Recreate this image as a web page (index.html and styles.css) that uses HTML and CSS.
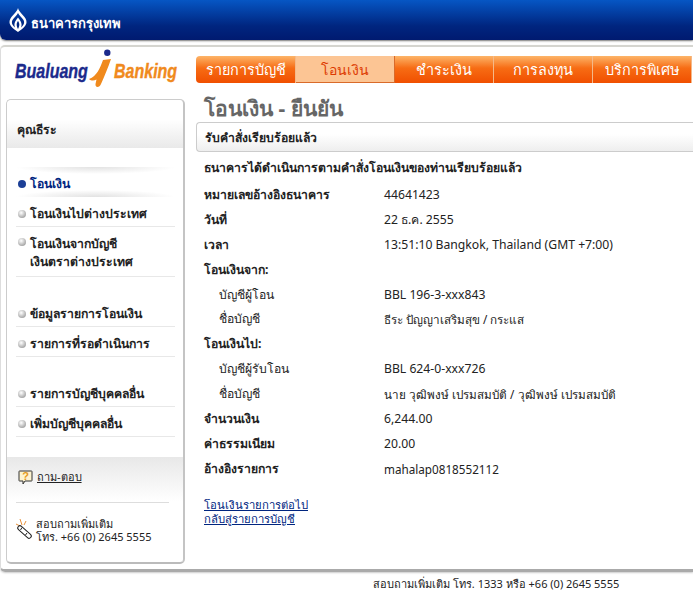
FILE: index.html
```html
<!DOCTYPE html>
<html lang="th">
<head>
<meta charset="utf-8">
<title>Bualuang iBanking</title>
<link rel="stylesheet" href="styles.css">
</head>
<body>
<header class="topbar">
  <svg class="lotus" width="18" height="24" viewBox="0 0 18 24">
    <path fill-rule="evenodd" fill="#fff" d="M9 0C10 4 14 6.500 16.500 10.500C19 15 17 18.500 9 24C1 18.500 -1 15 1.500 10.500C4 6.500 8 4 9 0ZM9 5C8 7.500 5 9.500 3.500 12C2 15 3.500 17.500 6 19.500C4.500 16 6 13 9 9.500C12 13 13.500 16 12 19.500C14.500 17.500 16 15 14.500 12C13 9.500 10 7.500 9 5ZM9 13C7.500 15 7 17 9 21C11 17 10.500 15 9 13Z"/>
  </svg>
  <span class="bankname">ธนาคารกรุงเทพ</span>
</header>
<div class="shell">
  <div class="brandrow">
    <div class="logo">
      <span class="logo-a">Bualuang</span>
      <svg class="logo-i" width="26" height="40" viewBox="0 0 26 40">
        <circle cx="19.300" cy="3.700" r="3.200" fill="#1b2a8c"/>
        <path d="M1 30C9 27 12 19 15 11L23 10C20 19 16 28 13 35C11.500 39 7 39 7.500 35L8.500 30.500C6 32 3 32 1 30Z" fill="#f08a1d"/>
      </svg>
      <span class="logo-b">Banking</span>
    </div>
    <nav class="tabs">
      <a class="tab first">รายการบัญชี</a>
      <a class="tab active">โอนเงิน</a>
      <a class="tab">ชำระเงิน</a>
      <a class="tab">การลงทุน</a>
      <a class="tab">บริการพิเศษ</a>
    </nav>
  </div>
  <div class="columns">
    <aside class="side">
      <div class="side-head">คุณธีระ</div>
      <ul class="menu">
        <li class="item current"><i class="dot"></i><span>โอนเงิน</span></li>
        <li class="item"><i class="dot"></i><span>โอนเงินไปต่างประเทศ</span></li>
        <li class="item tall"><i class="dot"></i><span>โอนเงินจากบัญชี<br>เงินตราต่างประเทศ</span></li>
        <li class="item gap"><i class="dot"></i><span>ข้อมูลรายการโอนเงิน</span></li>
        <li class="item"><i class="dot"></i><span>รายการที่รอดำเนินการ</span></li>
        <li class="item gap"><i class="dot"></i><span>รายการบัญชีบุคคลอื่น</span></li>
        <li class="item"><i class="dot"></i><span>เพิ่มบัญชีบุคคลอื่น</span></li>
      </ul>
      <div class="faq">
        <svg width="15" height="15" viewBox="0 0 15 15">
          <path d="M1.500 1H13.500Q14 1 14 1.500V10.500Q14 11 13.500 11H7L5 14V11H1.500Q1 11 1 10.500V1.500Q1 1 1.500 1Z" fill="#fdf3d0" stroke="#333"/>
          <text x="7.500" y="9.500" class="qmark">?</text>
        </svg>
        <a class="faq-link">ถาม-ตอบ</a>
      </div>
      <div class="contact">
        <svg width="16" height="22" viewBox="0 0 16 22">
          <path d="M6 7L4 1M8 7L10 3M4 8L0 6" stroke="#e8903a" fill="none"/>
          <path d="M4 10L13 18" stroke="#222" stroke-width="5.500" stroke-linecap="round"/>
          <path d="M4 10L13 18" stroke="#fff" stroke-width="3.500" stroke-linecap="round"/>
          <path d="M6 9.500L4.500 12M11 15L9.500 17" stroke="#222"/>
        </svg>
        <p>สอบถามเพิ่มเติม<br>โทร. +66 (0) 2645 5555</p>
      </div>
    </aside>
    <main class="main">
      <h1>โอนเงิน - ยืนยัน</h1>
      <div class="notice">รับคำสั่งเรียบร้อยแล้ว</div>
      <p class="intro">ธนาคารได้ดำเนินการตามคำสั่งโอนเงินของท่านเรียบร้อยแล้ว</p>
      <dl class="rows">
        <dt>หมายเลขอ้างอิงธนาคาร</dt><dd>44641423</dd>
        <dt>วันที่</dt><dd>22 ธ.ค. 2555</dd>
        <dt>เวลา</dt><dd>13:51:10 Bangkok, Thailand (GMT +7:00)</dd>
        <dt>โอนเงินจาก:</dt><dd></dd>
        <dt class="sub">บัญชีผู้โอน</dt><dd>BBL 196-3-xxx843</dd>
        <dt class="sub">ชื่อบัญชี</dt><dd class="name">ธีระ ปัญญาเสริมสุข / กระแส</dd>
        <dt>โอนเงินไป:</dt><dd></dd>
        <dt class="sub">บัญชีผู้รับโอน</dt><dd>BBL 624-0-xxx726</dd>
        <dt class="sub">ชื่อบัญชี</dt><dd class="name">นาย วุฒิพงษ์ เปรมสมบัติ / วุฒิพงษ์ เปรมสมบัติ</dd>
        <dt>จำนวนเงิน</dt><dd>6,244.00</dd>
        <dt>ค่าธรรมเนียม</dt><dd>20.00</dd>
        <dt>อ้างอิงรายการ</dt><dd class="ref">mahalap0818552112</dd>
      </dl>
      <div class="links">
        <a>โอนเงินรายการต่อไป</a>
        <a>กลับสู่รายการบัญชี</a>
      </div>
    </main>
  </div>
</div>
<footer class="foot">สอบถามเพิ่มเติม โทร. 1333 หรือ +66 (0) 2645 5555</footer>
</body>
</html>
```
FILE: styles.css
```css
* { box-sizing: border-box; }
html, body { margin: 0; padding: 0; }
body {
  width: 693px;
  height: 599px;
  overflow: hidden;
  background: #fff;
  color: #222;
  font: 12.2px/14px "Noto Sans", "DejaVu Sans", sans-serif;
}
.topbar {
  height: 40px;
  background: linear-gradient(#0656c4, #00257f 65%, #001a70);
  border-radius: 0 0 0 6px;
  box-shadow: 0 1px 2px #777;
  display: flex;
  align-items: center;
  padding: 0 0 0 9px;
  gap: 4px;
}
.lotus { margin-top: -1px; }
.bankname { color: #fff; font-weight: 700; font-size: 13px; margin-top: 6px; }
.shell {
  margin-top: 5px;
  height: 527px;
  border-top: 2px solid #d5d5d0;
  border-bottom: 3px solid #aaa;
  border-left: 1px solid #ddd;
  border-radius: 5px 0 0 5px;
  overflow: hidden;
  box-shadow: 0 1px 2px #ccc;
}
.brandrow {
  display: flex;
  height: 52px;
  padding-left: 14px;
}
.logo {
  flex: none;
  width: 181px;
  height: 40px;
  margin-top: 2px;
  display: flex;
  align-items: center;
  font: italic 700 20px/20px "Liberation Sans", sans-serif;
  -webkit-text-stroke: 0.4px currentColor;
  white-space: nowrap;
}
.logo-a { color: #1b2a8c; width: 73px; flex: none; transform: scaleX(.8); transform-origin: 0 50%; padding-top: 4px; }
.logo-b { color: #f08a1d; flex: none; transform: scaleX(.8); transform-origin: 0 50%; padding-top: 4px; }
.logo-i { flex: none; }
.tabs {
  display: flex;
  margin-top: 9px;
  height: 27px;
  flex: 1;
}
.tab {
  width: 99px;
  height: 27px;
  border-right: 1px solid #f4b98a;
  background: linear-gradient(#fdb468, #f76c14 45%, #f04f00);
  color: #fff;
  font-size: 14.400px;
  line-height: 27px;
  text-align: center;
  white-space: nowrap;
}
.tab.first { border-radius: 4px 0 0 4px; width: 100px; }
.tab.active {
  background: #fcc594;
  color: #dd3a00;
  border-bottom: 1px solid #d96a2a;
  border-right: 1px solid #d96a2a;
  font-size: 14px;
}
.columns { display: flex; }
.side {
  width: 179px;
  height: 465px;
  margin-left: 5px;
  border: 1px solid #ccc;
  border-right: 2px solid #c4c4c4;
  border-bottom: 2px solid #bbb;
  border-radius: 5px;
  flex: none;
}
.side-head {
  height: 48px;
  padding: 23px 0 0 10px;
  font-weight: 700;
  background: linear-gradient(#fff 40%, #e9e9e9);
  border-radius: 5px 5px 0 0;
}
.menu {
  list-style: none;
  margin: 19px 0 0;
  padding: 0 8px 0 9px;
  height: 290px;
  font-weight: 700;
}
.item {
  display: flex;
  height: 30px;
  padding-top: 10px;
  border-bottom: 1px solid #e8e8e8;
  gap: 4px;
  white-space: nowrap;
}
.item.current {
  color: #00257f;
  border-bottom: 0;
  background:
    radial-gradient(ellipse 50% 7px at 50% 0, #e2e2e2, transparent),
    radial-gradient(ellipse 50% 7px at 50% 100%, #e2e2e2, transparent);
}
.item.tall { height: 50px; line-height: 18px; padding-top: 8px; }
.item.gap { height: 50px; padding-top: 30px; }
.dot {
  flex: none;
  width: 8px;
  height: 8px;
  margin: 3px 0 0 2px;
  border-radius: 50%;
  background: radial-gradient(circle at 40% 35%, #fff, #aaa 70%, #888);
}
.current .dot { background: #1c3f96; }
.faq {
  height: 45px;
  padding: 13px 0 0 11px;
  display: flex;
  align-items: flex-start;
  gap: 4px;
  background: linear-gradient(#e8e8e8, #fff);
}
.qmark { font: 700 11px "Liberation Sans", sans-serif; fill: #e59a1c; text-anchor: middle; }
.faq-link { text-decoration: underline; font-size: 11px; color: #222; }
.contact {
  margin: 0 14px 0 9px;
  border-top: 1px solid #ddd;
  padding-top: 14px;
  display: flex;
  gap: 4px;
  font-size: 11px;
  line-height: 13px;
}
.contact svg { margin-top: 1px; flex: none; }
.contact p { margin: 0; white-space: nowrap; }
.main {
  flex: none;
  width: 497px;
  margin-left: 11px;
  margin-top: -4px;
}
h1 {
  margin: 0 0 0 8px;
  height: 27px;
  font-size: 21px;
  line-height: 26px;
  color: #666;
  font-weight: 700;
}
.notice {
  height: 30px;
  border: 1px solid #ccc;
  border-right: 0;
  border-radius: 4px 0 0 4px;
  background: linear-gradient(#fff 40%, #eee);
  font-weight: 700;
  padding: 8px 0 0 8px;
}
.intro { margin: 9px 0 0 8px; font-weight: 700; white-space: nowrap; }
.rows {
  margin: 7.600px 0 0 8px;
  display: grid;
  grid-template-columns: 180px 1fr;
  grid-auto-rows: 24.900px;
  align-items: center;
}
dt { font-weight: 700; }
dt.sub { font-weight: 400; padding-left: 15px; }
dd { margin: 0; white-space: nowrap; }
dd.name { font-size: 11.700px; }
dd.ref { font-size: 11.700px; }
.links {
  margin: 16.400px 0 0 8px;
  display: flex;
  flex-direction: column;
  color: #00257f;
  text-decoration: underline;
  font-size: 11.300px;
}
.foot {
  padding: 5px 0 0 373px;
  font-size: 11px;
  white-space: nowrap;
}
```
